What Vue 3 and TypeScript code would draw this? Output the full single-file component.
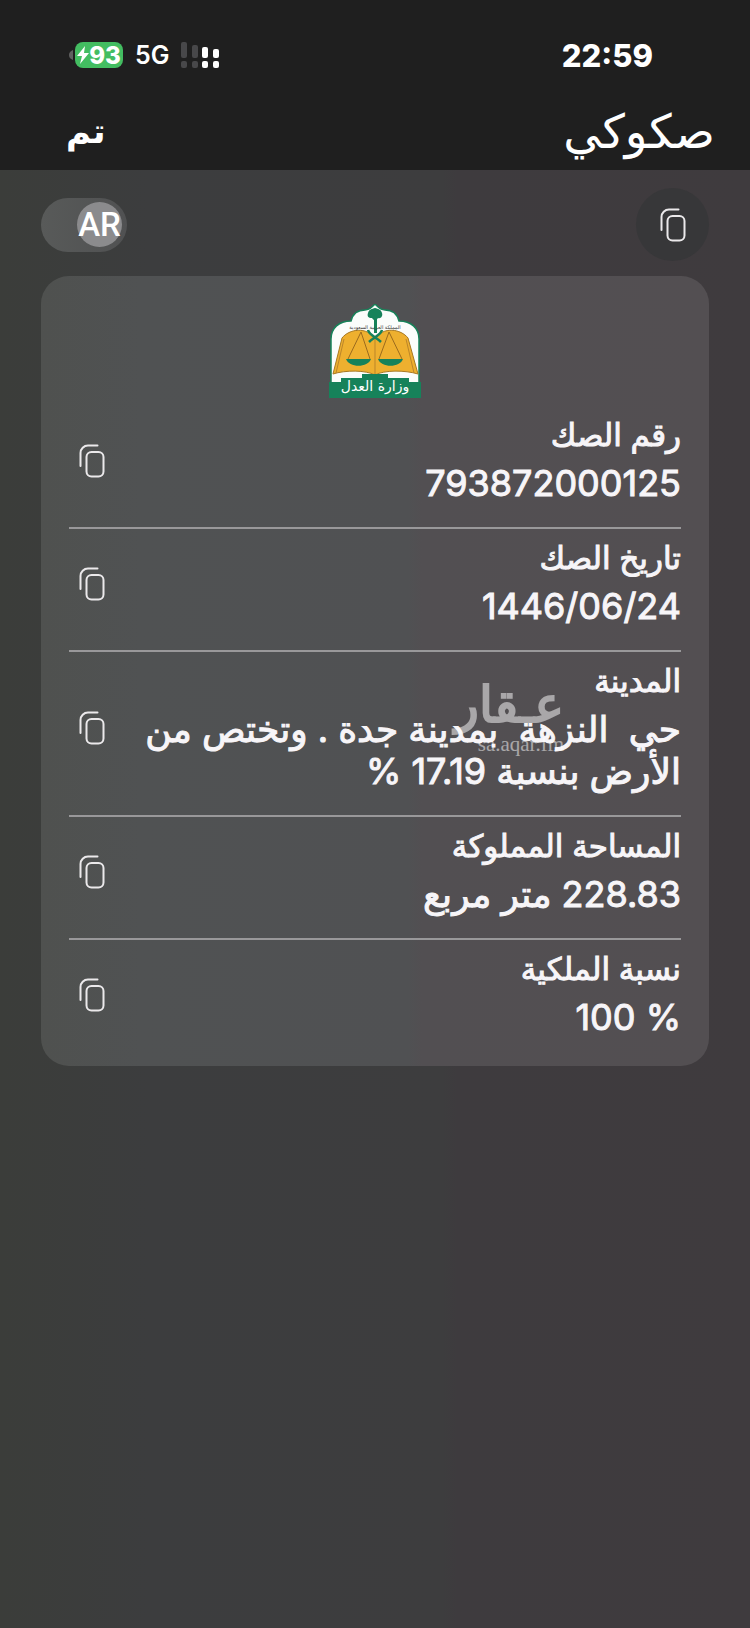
<script setup lang="ts">
import { ref } from 'vue'

interface DeedField {
  id: string
  label: string
  value: string
  ltr?: boolean
  mark?: boolean
}

const arabic = ref(true)

const fields: DeedField[] = [
  { id: 'number', label: 'رقم الصك', value: '793872000125' },
  { id: 'date', label: 'تاريخ الصك', value: '1446/06/24', ltr: true },
  {
    id: 'city',
    label: 'المدينة',
    value: 'حي  النزهة  بمدينة جدة . وتختص من الأرض بنسبة 17.19 %',
    mark: true,
  },
  { id: 'area', label: 'المساحة المملوكة', value: '228.83 متر مربع' },
  { id: 'share', label: 'نسبة الملكية', value: '100 %', ltr: true },
]

const bars = [
  { x: 0, y: 0, on: false },
  { x: 11, y: 3, on: false },
  { x: 21, y: 5, on: true },
  { x: 32, y: 7, on: true },
]

function copy(text: string) {
  navigator.clipboard?.writeText(text)
}

function copyAll() {
  copy(fields.map((f) => `${f.label}: ${f.value}`).join('\n'))
}
</script>

<template>
  <div class="page" dir="rtl" lang="ar">
    <header class="top">
      <div class="status">
        <time class="clock">22:59</time>
        <div class="indicators" dir="ltr">
          <div class="battery">
            <svg class="tip" viewBox="0 0 4 10" aria-hidden="true"><path d="M4 0v10C1 9 0 7 0 5s1-4 4-5z" /></svg>
            <div class="cell">
              <svg class="bolt" viewBox="0 0 12 18" aria-hidden="true"><path d="M8 0 0 10h5L3 18l9-11H7z" /></svg>
              <span>93</span>
            </div>
          </div>
          <span class="network">5G</span>
          <svg class="signal" viewBox="0 0 39 26" aria-hidden="true">
            <g v-for="b in bars" :key="b.x" :class="{ on: b.on }">
              <rect :x="b.x" :y="b.y" width="6" :height="16 - b.y" rx="2" />
              <rect :x="b.x" y="19" width="6" height="7" rx="2" />
            </g>
          </svg>
        </div>
      </div>
      <div class="nav">
        <h1>صكوكي</h1>
        <button type="button" class="done">تم</button>
      </div>
    </header>

    <main>
      <div class="tools">
        <button type="button" class="copy-all" aria-label="نسخ الكل" @click="copyAll">
          <svg class="copy-icon" viewBox="0 0 26 34" aria-hidden="true">
            <path d="M1.500 22V9a7.500 7.500 0 0 1 7.500-7.500h9.500" />
            <rect x="7.500" y="8" width="17" height="24.500" rx="5" />
          </svg>
        </button>
        <label class="lang">
          <input v-model="arabic" type="checkbox" role="switch" aria-label="اللغة" />
          <span class="knob">AR</span>
        </label>
      </div>

      <section class="card">
        <svg class="emblem" viewBox="0 0 92 94" role="img" aria-label="وزارة العدل">
          <path
            d="M2 94V35C2 24 10 17 22 17 24 9 30 6 36 6 41 6 43 3 46 0 49 3 51 6 56 6 62 6 68 9 70 17 82 17 90 24 90 35V94z"
            fill="#fbfdfb" stroke="#178259" stroke-width="1.500"
          />
          <path d="M4 70 13 34C20 25 38 22 46 35 54 22 72 25 79 34L89 70C76 66 55 66 46 71 37 66 16 66 4 70z" fill="#eeb02f" stroke="#a87820" />
          <path d="M7 69 15 35M85 69 77 35M46 35v35" fill="none" stroke="#bb852a" />
          <path d="M32 28 19 55M32 28 41 55M60 28 50 55M60 28 73 55" fill="none" stroke="#9b6b1e" />
          <path d="M17 55h25c-3 9-22 9-25 0zM49 55h25c-3 9-22 9-25 0z" fill="#16825a" />
          <path d="M39 26c1 5 8 7 13 12M53 26c-1 5-8 7-13 12" fill="none" stroke="#16825a" stroke-width="2.500" />
          <path d="M45 12h3v17h-3z" fill="#16825a" />
          <path d="M39 9c1-4 4-4 7-5 3 1 6 1 7 5 1 3-1 6-4 5-2 3-4 3-6 0-4 0-5-2-4-5z" fill="#16825a" />
          <path d="M0 94V78H12V74H33V70H59V74H80V78H92V94z" fill="#16825a" />
          <text x="46" y="25" class="emblem-small">المملكة العربية السعودية</text>
          <text x="46" y="87" class="emblem-name">وزارة العدل</text>
        </svg>

        <dl>
          <div v-for="f in fields" :key="f.id" class="row">
            <div class="text">
              <dt>{{ f.label }}</dt>
              <dd><bdi :dir="f.ltr ? 'ltr' : 'rtl'">{{ f.value }}</bdi></dd>
            </div>
            <button type="button" class="copy" :aria-label="`نسخ ${f.label}`" @click="copy(f.value)">
              <svg class="copy-icon" viewBox="0 0 26 34" aria-hidden="true">
                <path d="M1.500 22V9a7.500 7.500 0 0 1 7.500-7.500h9.500" />
                <rect x="7.500" y="8" width="17" height="24.500" rx="5" />
              </svg>
            </button>
            <div v-if="f.mark" class="mark">
              <span class="mark-name">عـقار</span>
              <span class="mark-site" dir="ltr">sa.aqar.fm</span>
            </div>
          </div>
        </dl>
      </section>
    </main>
  </div>
</template>

<style>
body {
  margin: 0;
  background: #3c3d3d;
}
</style>

<style scoped>
.page {
  min-height: 100vh;
  background: linear-gradient(90deg, #3b3d3a 0%, #3c3d3e 20%, #3d3d3e 59%, #3e3b3e 61%, #3f3b3e 100%);
  color: #f7f5f8;
  font-family: Inter, "DejaVu Sans", sans-serif;
}

button {
  padding: 0;
  border: 0;
  background: none;
  color: inherit;
  font: inherit;
  cursor: pointer;
}

.top {
  background: #1f1f1f;
  color: #fff;
}

.status {
  display: flex;
  justify-content: space-between;
  align-items: center;
  height: 36px;
  padding: 37px 97px 0 69px;
}

.clock {
  font-size: 31px;
  font-weight: 800;
}

.indicators,
.battery,
.cell {
  display: flex;
  align-items: center;
}

.indicators {
  gap: 12px;
}

.battery {
  gap: 2px;
}

.tip {
  width: 4px;
  height: 10px;
  fill: #606060;
}

.cell {
  justify-content: center;
  width: 48px;
  height: 26px;
  border-radius: 8px;
  background: #43bd61;
  font-size: 24px;
  font-weight: 800;
}

.bolt {
  width: 12px;
  height: 18px;
  fill: #fff;
}

.network {
  font-size: 25px;
  font-weight: 600;
}

.signal {
  width: 39px;
  height: 26px;
  fill: #48484a;
}

.signal .on {
  fill: #fff;
}

.nav {
  display: flex;
  justify-content: space-between;
  align-items: center;
  height: 79px;
  padding: 18px 35px 0 66px;
}

h1 {
  margin: 0;
  font-size: 47px;
  font-weight: 400;
  line-height: 60px;
}

.done {
  font-size: 34px;
  font-weight: 700;
  line-height: 60px;
}

main {
  padding: 18px 41px 40px;
}

.tools {
  display: flex;
  justify-content: space-between;
  align-items: center;
}

.copy-all {
  display: grid;
  place-items: center;
  width: 73px;
  height: 73px;
  border-radius: 50%;
  background: #373739;
}

.copy-icon {
  display: block;
  width: 26px;
  height: 34px;
  fill: none;
  stroke: #ebe9eb;
  stroke-width: 2;
  stroke-linecap: round;
}

.lang {
  display: grid;
  align-items: center;
  direction: ltr;
}

.lang input,
.knob {
  grid-area: 1 / 1;
}

.lang input {
  appearance: none;
  width: 86px;
  height: 54px;
  margin: 0;
  border-radius: 27px;
  background: linear-gradient(90deg, #585a59, #505152);
}

.knob {
  display: flex;
  justify-content: center;
  align-items: center;
  justify-self: end;
  width: 45px;
  height: 45px;
  margin-right: 5px;
  border-radius: 50%;
  background: #8b8b8d;
  color: #fff;
  font-family: Roboto, sans-serif;
  font-size: 33px;
  font-weight: 500;
  pointer-events: none;
}

.card {
  margin-top: 15px;
  padding: 28px 28px 5px;
  border-radius: 28px;
  background: linear-gradient(90deg, #4f514f 0%, #505253 15%, #505153 55%, #524f52 57%, #534f52 100%);
}

.emblem {
  display: block;
  width: 92px;
  height: 94px;
  margin: 0 auto;
}

.emblem text {
  font-family: "DejaVu Sans", sans-serif;
  text-anchor: middle;
}

.emblem-small {
  fill: #333;
  font-size: 5px;
}

.emblem-name {
  fill: #fff;
  font-size: 14px;
}

dl {
  margin: 8px 0 0;
}

.row {
  position: relative;
  display: flex;
  justify-content: space-between;
  align-items: center;
  gap: 22px;
  padding: 11px 0 23px;
}

.row + .row {
  border-top: 2px solid #99989a;
}

.text {
  flex: 1;
}

dt {
  font-size: 31px;
  line-height: 36px;
}

dd {
  margin: 9px 0 0;
  font-size: 36px;
  font-weight: 400;
  line-height: 42px;
  white-space: pre-wrap;
}

dt,
dd {
  -webkit-text-stroke: 1px currentColor;
}

.copy {
  padding: 0 10px;
}

.mark {
  position: absolute;
  top: 22px;
  right: 117px;
  display: grid;
  justify-items: start;
  color: #fff;
  opacity: 0.5;
  pointer-events: none;
}

.mark-name {
  font-size: 50px;
  line-height: 60px;
  -webkit-text-stroke: 2px currentColor;
}

.mark-site {
  font-family: "Liberation Serif", serif;
  font-size: 21px;
  line-height: 20px;
}
</style>
